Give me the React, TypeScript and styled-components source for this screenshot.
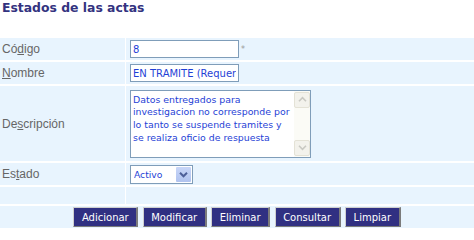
import React from 'react';
import styled, { createGlobalStyle } from 'styled-components';

const GlobalStyle = createGlobalStyle`
  html, body {
    margin: 0;
    padding: 0;
    background: #ffffff;
  }
  body {
    font-family: "DejaVu Sans", Verdana, sans-serif;
  }
`;

const Page = styled.div`
  width: 474px;
`;

const Title = styled.h1`
  margin: 0 0 23px;
  padding: 0 2px;
  font-family: "DejaVu Sans", Verdana, sans-serif;
  font-size: 12.4px;
  font-weight: bold;
  line-height: 15px;
  color: #333380;
`;

const Form = styled.div`
  display: grid;
  grid-template-columns: 125px 1fr;
  grid-template-rows: 22px 22px 75px 22px 17px 22px;
  column-gap: 1px;
  row-gap: 2px;
`;

const Label = styled.label`
  display: flex;
  align-items: center;
  padding: 0 2px;
  background: #e8f4fe;
  font-family: "Liberation Sans", Arial, sans-serif;
  font-size: 12px;
  color: #666666;
`;

const Field = styled.div`
  display: flex;
  align-items: center;
  gap: 2px;
  padding: 0 4px;
  background: #e8f4fe;
`;

const Required = styled.span`
  font-family: "DejaVu Sans", Verdana, sans-serif;
  font-size: 8px;
  color: #999999;
`;

const TextInput = styled.input`
  box-sizing: border-box;
  width: 109px;
  height: 18px;
  margin: 0;
  padding: 0 2px;
  border: 1px solid #7f9db9;
  background: #ffffff;
  font-family: "DejaVu Sans", Verdana, sans-serif;
  font-size: 10px;
  color: #1f3fd6;
  outline: none;
`;

const TextBox = styled.div`
  box-sizing: border-box;
  width: 181px;
  height: 68px;
  display: flex;
  border: 1px solid #7f9db9;
  background: #ffffff;
`;

const TextArea = styled.textarea`
  flex: 1;
  min-width: 0;
  margin: 0;
  padding: 3px 1px 0 2px;
  border: 0;
  resize: none;
  overflow: hidden;
  background: transparent;
  font-family: "DejaVu Sans", Verdana, sans-serif;
  font-size: 9.4px;
  line-height: 12.7px;
  color: #1f3fd6;
  outline: none;
`;

const ScrollBar = styled.div`
  width: 16px;
  display: flex;
  flex-direction: column;
  justify-content: space-between;
  padding: 1px 0;
  background: #fbfbf6;
`;

const ScrollButton = styled.span`
  box-sizing: border-box;
  height: 16px;
  display: flex;
  align-items: center;
  justify-content: center;
  border: 1px solid #e4e2d6;
  border-radius: 2px;
  background: #f3f2ec;
`;

const SelectBox = styled.div`
  box-sizing: border-box;
  width: 63px;
  height: 19px;
  display: flex;
  border: 1px solid #7f9db9;
  background: #ffffff;
`;

const Select = styled.select`
  flex: 1;
  min-width: 0;
  margin: 0;
  padding: 0 0 0 3px;
  border: 0;
  appearance: none;
  background: transparent;
  font-family: "DejaVu Sans", Verdana, sans-serif;
  font-size: 9.2px;
  color: #1f3fd6;
  outline: none;
`;

const DropButton = styled.span`
  width: 15px;
  margin: 1px;
  display: flex;
  align-items: center;
  justify-content: center;
  border-radius: 1px;
  background: linear-gradient(#c8d6f8, #b0c3ef);
`;

const Actions = styled.div`
  grid-column: 1 / -1;
  display: flex;
  justify-content: center;
  align-items: flex-start;
  gap: 4.5px;
  padding-top: 1px;
  background: #e8f4fe;
`;

const Button = styled.button`
  height: 20px;
  margin: 0;
  padding: 0 7.5px;
  border: 1px solid;
  border-color: #cfcfcf #7b7b7b #7b7b7b #cfcfcf;
  border-right-width: 2px;
  background: #303082;
  color: #ffffff;
  font-family: "DejaVu Sans", Verdana, sans-serif;
  font-size: 10px;
  cursor: pointer;
`;

const Chevron: React.FC<{ up?: boolean; color: string; weight: number }> = ({ up, color, weight }) => (
  <svg width="9" height="7" viewBox="0 0 9 7">
    <path
      d={up ? 'M1 5.2 L4.5 1.7 L8 5.2' : 'M1 1.8 L4.5 5.3 L8 1.8'}
      fill="none"
      stroke={color}
      strokeWidth={weight}
    />
  </svg>
);

const buttons = ['Adicionar', 'Modificar', 'Eliminar', 'Consultar', 'Limpiar'];

const App: React.FC = () => {
  return (
    <Page>
      <GlobalStyle />
      <Title>Estados de las actas</Title>
      <Form>
        <Label htmlFor="codigo">
          Có<u>d</u>igo
        </Label>
        <Field>
          <TextInput id="codigo" defaultValue="8" />
          <Required>*</Required>
        </Field>

        <Label htmlFor="nombre">
          <u>N</u>ombre
        </Label>
        <Field>
          <TextInput id="nombre" defaultValue="EN TRAMITE (Requerimiento)" />
        </Field>

        <Label htmlFor="descripcion">
          De<u>s</u>cripción
        </Label>
        <Field>
          <TextBox>
            <TextArea
              id="descripcion"
              defaultValue="Datos entregados para investigacion no corresponde por lo tanto se suspende tramites y se realiza oficio de respuesta"
            />
            <ScrollBar>
              <ScrollButton>
                <Chevron up color="#c9c9c3" weight={1.6} />
              </ScrollButton>
              <ScrollButton>
                <Chevron color="#c9c9c3" weight={1.6} />
              </ScrollButton>
            </ScrollBar>
          </TextBox>
        </Field>

        <Label htmlFor="estado">
          Es<u>t</u>ado
        </Label>
        <Field>
          <SelectBox>
            <Select id="estado" defaultValue="A">
              <option value="A">Activo</option>
              <option value="I">Inactivo</option>
            </Select>
            <DropButton>
              <Chevron color="#4d5f99" weight={2} />
            </DropButton>
          </SelectBox>
        </Field>

        <Label as="div" />
        <Field />

        <Actions>
          {buttons.map((name) => (
            <Button key={name} type="button">
              {name}
            </Button>
          ))}
        </Actions>
      </Form>
    </Page>
  );
};

export default App;
